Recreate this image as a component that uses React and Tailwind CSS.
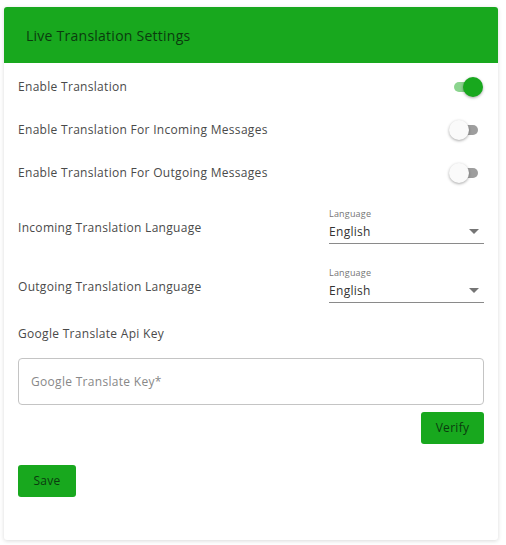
import React from "react";

function Switch({ on }) {
  return (
    <div className="relative w-[34px] h-[20px] flex items-center">
      <div className={"mx-auto w-[24px] h-[10px] rounded-full " + (on ? "bg-[#8bd48e]" : "bg-[#9e9e9e]")} />
      <div
        className={
          "absolute top-0 w-[20px] h-[20px] rounded-full shadow-[0_1px_3px_rgba(0,0,0,0.35)] " +
          (on ? "right-0 bg-[#18a81e]" : "left-0 bg-[#fafafa]")
        }
      />
    </div>
  );
}

function Select() {
  return (
    <div className="w-[155px] flex flex-col">
      <div className="text-[9px] leading-[12px] text-[#757575] tracking-[0.2px]">Language</div>
      <div className="flex items-center justify-between h-[24px] border-b border-[#8a8a8a]">
        <span className="text-[12px] text-[#333] tracking-[0.3px]">English</span>
        <svg width="10" height="5" viewBox="0 0 10 5" className="mr-[5px]">
          <path d="M0 0 L10 0 L5 5 Z" fill="#757575" />
        </svg>
      </div>
    </div>
  );
}

export default function App() {
  return (
    <div className="w-[506px] h-[545px] bg-white pt-[7px] px-[4px]" style={{ fontFamily: '"Open Sans", sans-serif' }}>
      <div className="w-[494px] h-[533px] bg-white rounded-[3px] shadow-[0_1px_4px_rgba(0,0,0,0.15)] overflow-hidden flex flex-col">
        <div className="h-[56px] bg-[#18a81e] flex items-center pl-[22px]">
          <span className="text-[14px] text-[#0b3b0e] tracking-[0.25px]">Live Translation Settings</span>
        </div>
        <div className="px-[14px] flex flex-col text-[12px] text-[#4a4a4a] tracking-[0.3px]">
          <div className="h-[43px] mt-[2px] flex items-center justify-between pr-[1px]">
            <span>Enable Translation</span>
            <Switch on />
          </div>
          <div className="h-[43px] flex items-center justify-between pr-[1px]">
            <span>Enable Translation For Incoming Messages</span>
            <Switch />
          </div>
          <div className="h-[43px] flex items-center justify-between pr-[1px]">
            <span>Enable Translation For Outgoing Messages</span>
            <Switch />
          </div>
          <div className="mt-[14px] flex items-center justify-between">
            <span className="mt-[4px]">Incoming Translation Language</span>
            <Select />
          </div>
          <div className="mt-[23px] flex items-center justify-between">
            <span className="mt-[4px]">Outgoing Translation Language</span>
            <Select />
          </div>
          <div className="mt-[22px]">Google Translate Api Key</div>
          <div className="mt-[15px] h-[47px] border border-[#c4c4c4] rounded-[4px] flex items-center px-[12px]">
            <span className="text-[#888]">Google Translate Key*</span>
          </div>
          <div className="mt-[7px] flex justify-end">
            <button className="w-[63px] h-[32px] rounded-[3px] bg-[#18a81e] text-[12px] text-[#0b3b0e] tracking-[0.3px]">Verify</button>
          </div>
          <div className="mt-[21px]">
            <button className="w-[58px] h-[32px] rounded-[3px] bg-[#18a81e] text-[12px] text-[#0b3b0e] tracking-[0.3px]">Save</button>
          </div>
        </div>
      </div>
    </div>
  );
}
